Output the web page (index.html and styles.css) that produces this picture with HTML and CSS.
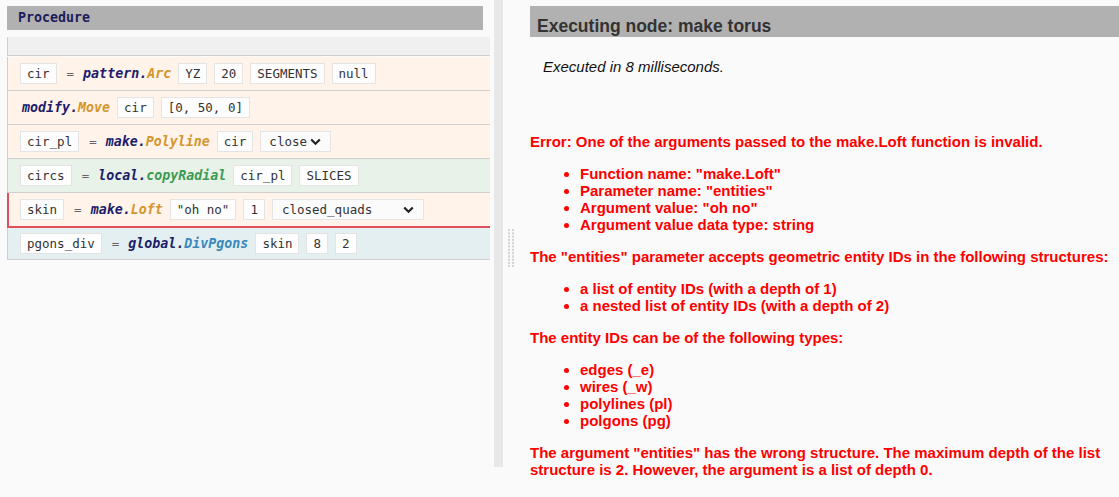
FILE: index.html
```html
<!DOCTYPE html>
<html>
<head>
<meta charset="utf-8">
<link rel="stylesheet" href="styles.css">
</head>
<body>
<div class="app">
  <section class="left">
    <div class="proc-head">Procedure</div>
    <div class="blank-row"></div>
    <div class="row peach">
      <span class="arg">cir</span>
      <span class="eq">=</span>
      <span class="fn"><b class="mod">pattern</b><i class="dot">.</i><i class="fname">Arc</i></span>
      <span class="arg">YZ</span>
      <span class="arg">20</span>
      <span class="arg">SEGMENTS</span>
      <span class="arg">null</span>
    </div>
    <div class="row peach">
      <span class="fn solo"><b class="mod">modify</b><i class="dot">.</i><i class="fname">Move</i></span>
      <span class="arg">cir</span>
      <span class="arg">[0, 50, 0]</span>
    </div>
    <div class="row peach">
      <span class="arg">cir_pl</span>
      <span class="eq">=</span>
      <span class="fn"><b class="mod">make</b><i class="dot">.</i><i class="fname">Polyline</i></span>
      <span class="arg">cir</span>
      <span class="sel sel-close">close<svg class="chev" width="11" height="8" viewBox="0 0 11 8"><path d="M1.2 1.5 L5.5 5.8 L9.8 1.5" fill="none" stroke="#222" stroke-width="2.2"/></svg></span>
    </div>
    <div class="row green">
      <span class="arg">circs</span>
      <span class="eq">=</span>
      <span class="fn"><b class="mod">local</b><i class="dot">.</i><i class="fname fgreen">copyRadial</i></span>
      <span class="arg">cir_pl</span>
      <span class="arg">SLICES</span>
    </div>
    <div class="row peach error">
      <span class="arg">skin</span>
      <span class="eq">=</span>
      <span class="fn"><b class="mod">make</b><i class="dot">.</i><i class="fname">Loft</i></span>
      <span class="arg">"oh no"</span>
      <span class="arg">1</span>
      <span class="sel sel-wide">closed_quads<svg class="chev" width="11" height="8" viewBox="0 0 11 8"><path d="M1.2 1.5 L5.5 5.8 L9.8 1.5" fill="none" stroke="#222" stroke-width="2.2"/></svg></span>
    </div>
    <div class="row blue last">
      <span class="arg">pgons_div</span>
      <span class="eq">=</span>
      <span class="fn"><b class="mod">global</b><i class="dot">.</i><i class="fname fblue">DivPgons</i></span>
      <span class="arg">skin</span>
      <span class="arg">8</span>
      <span class="arg">2</span>
    </div>
  </section>
  <div class="divider"></div>
  <div class="gripcol">
    <svg class="grip" width="7" height="38" viewBox="0 0 7 38">
      <g fill="#d2d2d2">
        <rect x="0" y="0" width="2" height="2"/><rect x="4" y="0" width="2" height="2"/>
        <rect x="0" y="3.3" width="2" height="2"/><rect x="4" y="3.3" width="2" height="2"/>
        <rect x="0" y="6.6" width="2" height="2"/><rect x="4" y="6.6" width="2" height="2"/>
        <rect x="0" y="9.9" width="2" height="2"/><rect x="4" y="9.9" width="2" height="2"/>
        <rect x="0" y="13.2" width="2" height="2"/><rect x="4" y="13.2" width="2" height="2"/>
        <rect x="0" y="16.5" width="2" height="2"/><rect x="4" y="16.5" width="2" height="2"/>
        <rect x="0" y="19.8" width="2" height="2"/><rect x="4" y="19.8" width="2" height="2"/>
        <rect x="0" y="23.1" width="2" height="2"/><rect x="4" y="23.1" width="2" height="2"/>
        <rect x="0" y="26.4" width="2" height="2"/><rect x="4" y="26.4" width="2" height="2"/>
        <rect x="0" y="29.7" width="2" height="2"/><rect x="4" y="29.7" width="2" height="2"/>
        <rect x="0" y="33" width="2" height="2"/><rect x="4" y="33" width="2" height="2"/>
        <rect x="0" y="36" width="2" height="2"/><rect x="4" y="36" width="2" height="2"/>
      </g>
    </svg>
  </div>
  <section class="right">
    <h2 class="exec-head">Executing node: make torus</h2>
    <p class="exec-time">Executed in 8 milliseconds.</p>
    <div class="err">
      <p class="err-first">Error: One of the arguments passed to the make.Loft function is invalid.</p>
      <ul class="first-list">
        <li>Function name: "make.Loft"</li>
        <li>Parameter name: "entities"</li>
        <li>Argument value: "oh no"</li>
        <li>Argument value data type: string</li>
      </ul>
      <p>The "entities" parameter accepts geometric entity IDs in the following structures:</p>
      <ul>
        <li>a list of entity IDs (with a depth of 1)</li>
        <li>a nested list of entity IDs (with a depth of 2)</li>
      </ul>
      <p>The entity IDs can be of the following types:</p>
      <ul>
        <li>edges (_e)</li>
        <li>wires (_w)</li>
        <li>polylines (pl)</li>
        <li>polgons (pg)</li>
      </ul>
      <p>The argument "entities" has the wrong structure. The maximum depth of the list structure is 2. However, the argument is a list of depth 0.</p>
    </div>
  </section>
</div>
</body>
</html>
```
FILE: styles.css
```css
html, body {
  margin: 0;
  padding: 0;
  background: #fafafa;
}
.app {
  display: flex;
  align-items: flex-start;
  width: 1119px;
  height: 497px;
  overflow: hidden;
}
.left {
  width: 483px;
  padding: 6px 4px 0 7px;
  flex: none;
}
.proc-head {
  width: 465px;
  height: 24px;
  padding-left: 11px;
  background: #b1b1b1;
  font: bold 13.3px "DejaVu Sans Mono", monospace;
  line-height: 24px;
  color: #1c1c5c;
}
.blank-row {
  margin-top: 7px;
  height: 18px;
  background: #f0f0f0;
  border-left: 1px solid #cfcfcf;
  border-bottom: 1px solid #cfcfcf;
  margin-bottom: 1px;
}
.row {
  display: flex;
  align-items: center;
  gap: 7px;
  height: 33px;
  padding-left: 12px;
  border-left: 1px solid #cfcfcf;
  border-bottom: 1px solid #cfcfcf;
  font-family: "DejaVu Sans Mono", monospace;
}
.row.last { height: 31px; }
.peach { background: #fff3ea; }
.green { background: #e9f2e9; }
.blue { background: #e3eff1; }
.row.error {
  border-left: 2px solid #e0505c;
  border-bottom: 2px solid #e0505c;
  padding-left: 11px;
}
.arg {
  height: 19px;
  line-height: 19px;
  padding: 0 6px;
  border: 1px solid #e4e4e4;
  background: #fdfdfd;
  font-size: 12.5px;
  color: #333;
  white-space: pre;
}
.eq {
  font-size: 12.5px;
  color: #666;
  margin: 0 2px 0 3px;
}
.fn {
  font-size: 13.3px;
  white-space: pre;
}
.fn.solo { margin-left: 2px; }
.mod {
  font-style: italic;
  font-weight: bold;
  color: #1b1c6c;
}
.dot {
  font-weight: bold;
  color: #1b1c6c;
}
.fname {
  font-weight: bold;
  color: #d4962e;
}
.fgreen { color: #3c9b54; }
.fblue { color: #3a89bd; }
.sel {
  display: flex;
  align-items: center;
  justify-content: space-between;
  height: 21px;
  padding: 0 9px 0 8px;
  border: 1px solid #e4e4e4;
  background: #fbfbfb;
  font-size: 12.5px;
  color: #333;
  box-sizing: border-box;
}
.sel-close { width: 71px; }
.sel-wide { width: 152px; padding-left: 9px; }
.divider {
  flex: none;
  width: 9px;
  height: 467px;
  background: #e8e8e8;
}
.gripcol {
  flex: none;
  width: 27px;
}
.grip {
  display: block;
  margin: 229px 0 0 5px;
}
.right {
  flex: 1;
  padding-top: 6px;
  font-family: "Liberation Sans", Arial, sans-serif;
}
.exec-head {
  margin: 0;
  height: 31px;
  box-sizing: border-box;
  padding: 10px 0 0 7px;
  line-height: 21px;
  font-size: 17.5px;
  font-weight: bold;
  color: #333;
  background: #b1b1b1;
}
.exec-time {
  margin: 21px 0 0 13px;
  font-size: 15px;
  line-height: 17px;
  font-style: italic;
  color: #111;
}
.err {
  color: #ff0000;
  font-weight: bold;
  font-size: 15px;
  line-height: 17px;
  margin-top: 58px;
}
.err p {
  margin: 15px 0;
}
.err p.err-first { margin-top: 0; margin-bottom: 15px; }
.err ul {
  margin: 15px 0;
  padding-left: 50px;
}
```
